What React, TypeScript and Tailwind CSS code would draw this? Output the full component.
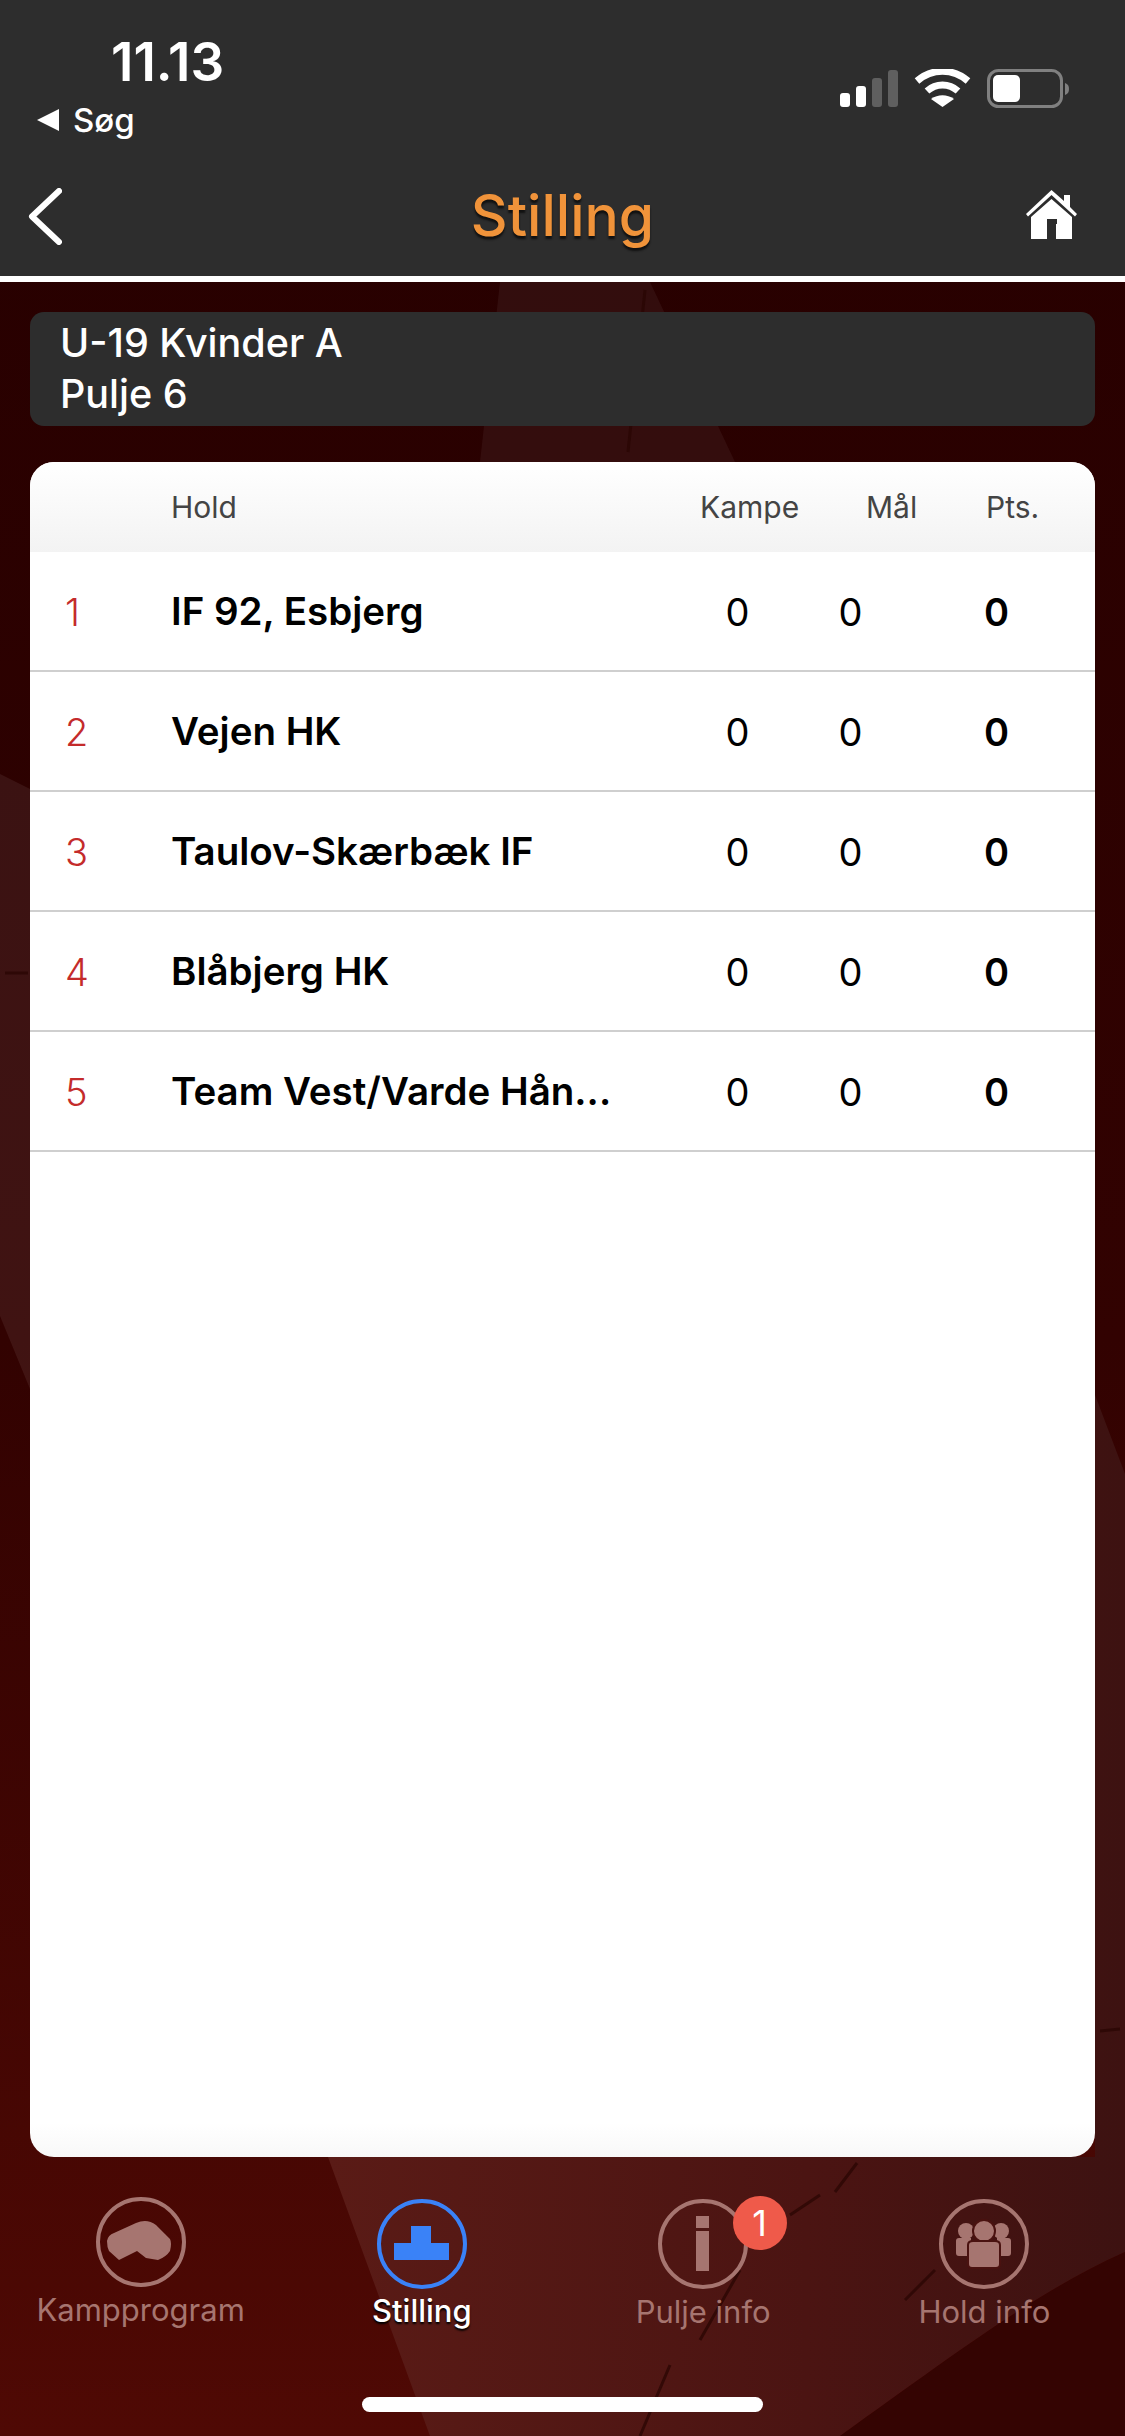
const font = { fontFamily: "Inter, 'Noto Sans', sans-serif" };

const standings = [
  { rank: 1, name: "IF 92, Esbjerg" },
  { rank: 2, name: "Vejen HK" },
  { rank: 3, name: "Taulov-Skærbæk IF" },
  { rank: 4, name: "Blåbjerg HK" },
  { rank: 5, name: "Team Vest/Varde Hån..." },
];

function Backdrop() {
  return (
    <svg className="absolute inset-0 h-full w-full" viewBox="0 0 1125 2436" preserveAspectRatio="none">
      <defs>
        <linearGradient id="wash" x1="0" y1="0" x2="0" y2="1">
          <stop offset="0" stopColor="#260000" />
          <stop offset="0.55" stopColor="#320201" />
          <stop offset="1" stopColor="#4f0904" />
        </linearGradient>
        <linearGradient id="wedge" x1="0" y1="0" x2="1" y2="0">
          <stop offset="0" stopColor="#5a1b16" />
          <stop offset="0.6" stopColor="#4b1412" />
          <stop offset="1" stopColor="#3d1211" />
        </linearGradient>
      </defs>
      <rect width="1125" height="2436" fill="url(#wash)" />
      <path d="M500 282H650L735 462H480Z" fill="#ffffff" fillOpacity="0.05" />
      <path d="M0 774L30 789V1389L0 1316Z" fill="#ffffff" fillOpacity="0.07" />
      <path d="M328 2157H1095V1395L1125 1474V2252C1040 2290 960 2350 840 2436H430Z" fill="url(#wedge)" />
      <path d="M1125 2252C1040 2290 960 2350 840 2436H1125Z" fill="#340402" />
      <path
        d="M857 2163L835 2192M820 2195L790 2215M740 2270L700 2340M670 2365L640 2436M935 2270L905 2300M645 290L628 452M5 973H28M1100 2031L1120 2029"
        stroke="#2a0503"
        strokeOpacity="0.75"
        strokeWidth="3"
        fill="none"
      />
    </svg>
  );
}

function StatusBar() {
  return (
    <div className="relative h-[132px] text-white">
      <div className="absolute left-[111px] top-[32px] text-[53px] leading-[60px] font-semibold">11.13</div>
      <div className="absolute left-[37px] top-[100px] flex items-center gap-[14px] text-[33px] leading-[40px] font-medium">
        <svg width="22" height="22" viewBox="0 0 22 22"><path d="M22 0V22L0 11Z" fill="#fff" /></svg>
        <span>Søg</span>
      </div>
      <div className="absolute left-[840px] top-[69px] flex items-start">
        <svg width="232" height="40" viewBox="0 0 232 40">
          <rect x="0" y="24" width="10" height="14" rx="3" fill="#fff" />
          <rect x="16" y="17" width="10" height="21" rx="3" fill="#fff" />
          <rect x="32" y="9" width="10" height="29" rx="3" fill="#5f5f5f" />
          <rect x="48" y="1" width="10" height="37" rx="3" fill="#5f5f5f" />
          <path d="M77 12C92-1 113-1 128 12" stroke="#fff" strokeWidth="7" fill="none" />
          <path d="M87 22C96 14 109 14 118 22" stroke="#fff" strokeWidth="7" fill="none" />
          <path d="M102.500 38L91 30C98 25 107 25 114 30Z" fill="#fff" />
          <rect x="148.500" y="1.500" width="73" height="36" rx="10" stroke="#808080" strokeWidth="3" fill="none" />
          <rect x="153" y="6" width="27" height="27" rx="5" fill="#fff" />
          <path d="M225 14C228 15 229 17 229 20C229 23 228 25 225 26Z" fill="#808080" />
        </svg>
      </div>
    </div>
  );
}

function NavBar() {
  return (
    <div className="relative flex h-[150px] items-start justify-center border-b-[6px] border-white pt-[51px]">
      <svg className="absolute left-[28px] top-[56px]" width="34" height="57" viewBox="0 0 34 57">
        <path d="M31 3L4 28.500L31 54" stroke="#fff" strokeWidth="6" strokeLinecap="round" strokeLinejoin="round" fill="none" />
      </svg>
      <span className="text-[57px] leading-[66px] font-medium text-[#f0933a] [text-shadow:0_3px_2px_#111]">Stilling</span>
      <svg className="absolute left-[1026px] top-[58px]" width="51" height="50" viewBox="0 0 51 50">
        <path d="M25.500 0L38 11V5H44V17L51 24L49 26.500L25.500 5L2 26.500L0 24Z" fill="#fff" />
        <path d="M25.500 9L46 27V49H30V29H21V49H5V27Z" fill="#fff" />
        <rect x="21" y="29" width="10" height="5" fill="#2d2d2d" />
      </svg>
    </div>
  );
}

function Standings() {
  return (
    <div className="h-[1695px] overflow-hidden rounded-[24px] bg-gradient-to-b from-white from-98% to-[#f8f8f8]">
      <div className="flex h-[90px] items-center bg-gradient-to-b from-white to-[#f3f3f3] text-[30px] text-[#444]">
        <span className="w-[141px]" />
        <span className="w-[529px]">Hold</span>
        <span className="w-[166px]">Kampe</span>
        <span className="w-[120px]">Mål</span>
        <span>Pts.</span>
      </div>
      {standings.map((team) => (
        <div key={team.rank} className="flex h-[120px] items-center border-b-2 border-[#cfcfcf] pt-[2px] text-[38px] text-black">
          <span className="w-[141px] pl-[35px] font-light text-[#c42b2b]">{team.rank}</span>
          <span className="w-[500px] text-[38.5px] font-semibold whitespace-nowrap">{team.name}</span>
          <span className="ml-[10px] w-[113px] text-center">0</span>
          <span className="w-[113px] text-center">0</span>
          <span className="w-[146px] pl-[33px] text-center font-semibold">0</span>
        </div>
      ))}
    </div>
  );
}

function TabItem({ label, active, children }: { label: string; active?: boolean; children: React.ReactNode }) {
  return (
    <div className="flex flex-col items-center">
      <svg width="90" height="90" viewBox="0 0 90 90">
        <circle cx="45" cy="45" r="43" fill="none" stroke={active ? "#3a82f7" : "#a67570"} strokeWidth="4" />
        {children}
      </svg>
      <span
        className={
          active
            ? "mt-[1px] text-[31px] leading-[42px] font-medium text-white [text-shadow:0_2px_2px_#000]"
            : "mt-[2px] text-[31px] leading-[42px] text-[#a67570]"
        }
      >
        {label}
      </span>
    </div>
  );
}

function TabBar() {
  return (
    <div className="relative grid h-[279px] grid-cols-4 pt-[42px]">
      <div className="-mt-[2px]">
        <TabItem label="Kampprogram">
          <path
            d="M11 44Q12 38 18 36L40 26Q51 21 60 28L74 42Q76 46 74 54Q70 60 62 63L50 61L41 54L23 63L13 54Q11 50 11 44Z"
            fill="#a67570"
          />
        </TabItem>
      </div>
      <TabItem label="Stilling" active>
        <path d="M34 27H54V44H72V61H17V44H34Z" fill="#3a82f7" />
      </TabItem>
      <div className="relative">
        <TabItem label="Pulje info">
          <rect x="38" y="17" width="13" height="12" fill="#a67570" />
          <rect x="38" y="32" width="13" height="40" fill="#a67570" />
        </TabItem>
        <div className="absolute left-[170px] top-[-3px] flex h-[54px] w-[54px] items-center justify-center rounded-full bg-[#ef5a4a] text-[36px] text-white">
          1
        </div>
      </div>
      <TabItem label="Hold info">
        <circle cx="27" cy="32" r="8" fill="#a67570" />
        <circle cx="62" cy="32" r="8" fill="#a67570" />
        <path d="M17 42Q17 39 20 39H32V57H20Q17 57 17 54ZM58 39H69Q72 39 72 42V54Q72 57 69 57H58Z" fill="#a67570" />
        <circle cx="45" cy="32" r="11" fill="#a67570" stroke="#4a1210" strokeWidth="2" />
        <path d="M29 46Q29 42 34 42H56Q61 42 61 46V65Q61 69 57 69H33Q29 69 29 65Z" fill="#a67570" stroke="#4a1210" strokeWidth="2" />
      </TabItem>
      <div className="absolute left-[362px] top-[240px] h-[15px] w-[401px] rounded-full bg-white" />
    </div>
  );
}

export default function App() {
  return (
    <div className="relative flex h-[2436px] w-[1125px] flex-col overflow-hidden" style={font}>
      <Backdrop />
      <div className="relative bg-[#2d2d2d]">
        <StatusBar />
        <NavBar />
      </div>
      <div className="relative px-[30px] pt-[30px]">
        <div className="h-[114px] rounded-[14px] bg-[#2d2d2d] px-[30px] pt-[6px] text-[39.5px] leading-[51px] font-medium text-white">
          <div>U-19 Kvinder A</div>
          <div>Pulje 6</div>
        </div>
        <div className="mt-[36px]">
          <Standings />
        </div>
      </div>
      <TabBar />
    </div>
  );
}
